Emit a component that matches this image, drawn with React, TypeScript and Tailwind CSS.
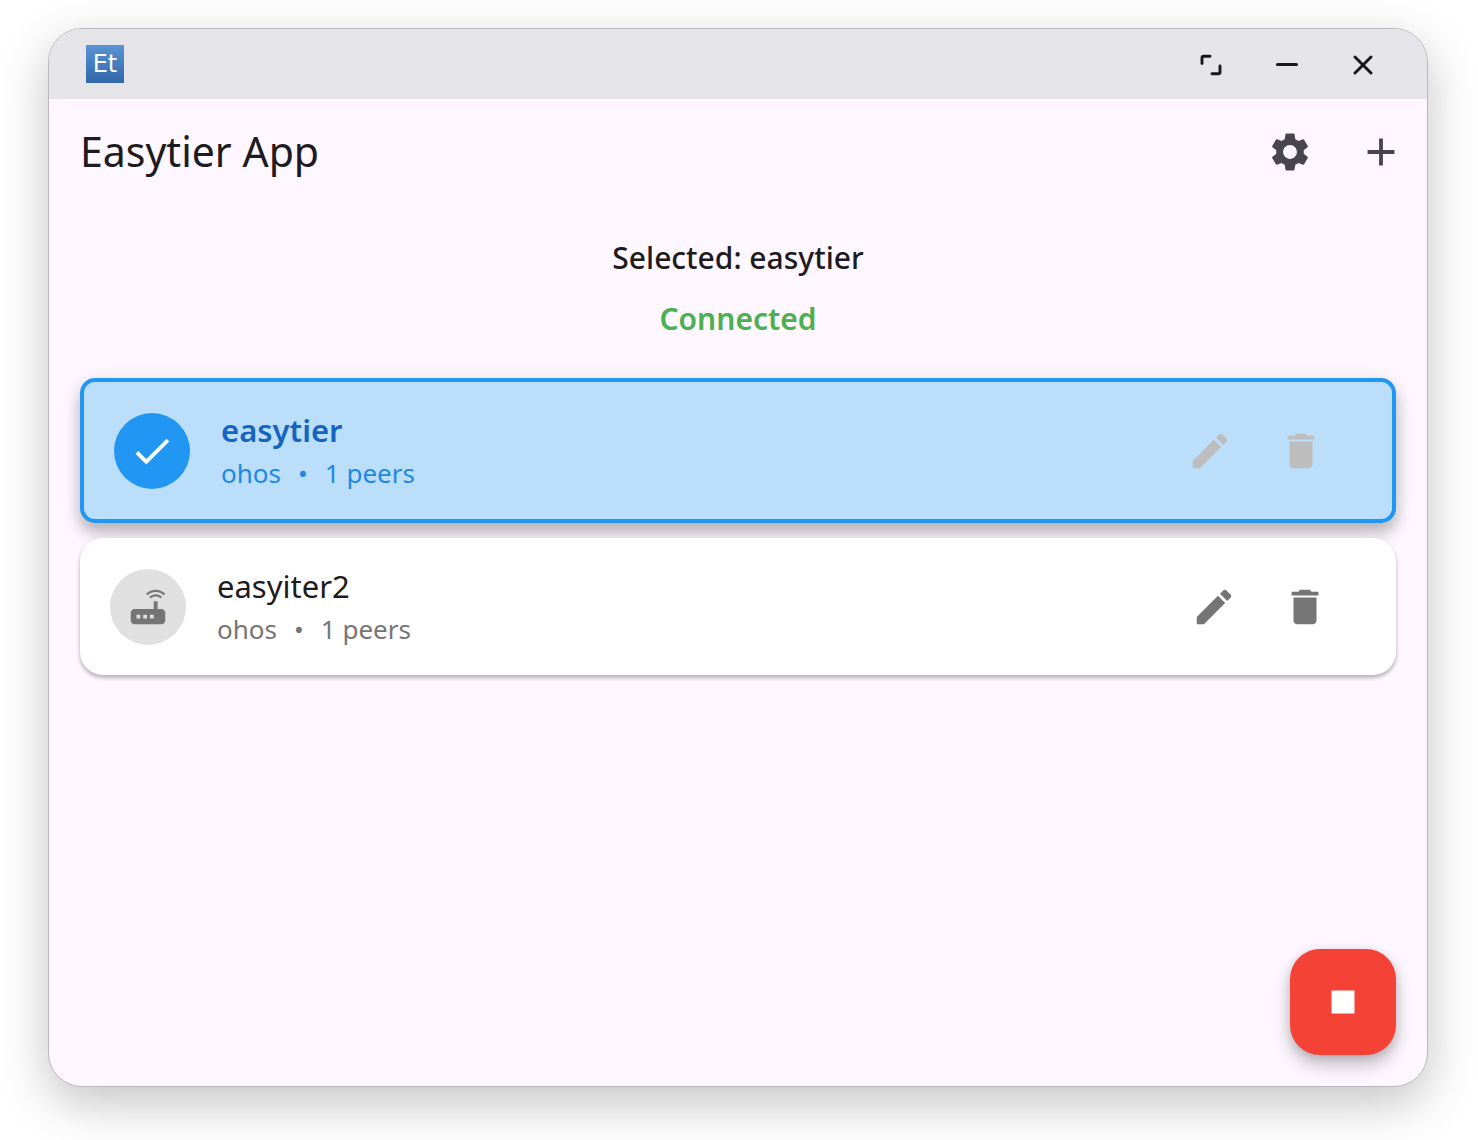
import React from "react";
import { MdAdd, MdCheck, MdDelete, MdEdit, MdRouter, MdSettings, MdStop } from "react-icons/md";

type Network = { name: string; host: string; peers: number; selected: boolean };

const networks: Network[] = [
  { name: "easytier", host: "ohos", peers: 1, selected: true },
  { name: "easyiter2", host: "ohos", peers: 1, selected: false },
];

function TitleBar() {
  return (
    <div className="flex h-[70px] shrink-0 items-center justify-between bg-[#e5e4e9] pr-[26px] pl-[37px]">
      <div className="flex size-[38px] items-center justify-center bg-linear-to-b from-[#5b93d3] to-[#2f67a8] font-['DejaVu_Sans',sans-serif] text-2xl leading-none text-white">
        Et
      </div>
      <div className="flex text-[#18181a]">
        <button type="button" aria-label="Maximize" className="flex h-[70px] w-[76px] items-center justify-center">
          <svg width="24" height="24" viewBox="0 0 24 24" fill="none" stroke="currentColor" strokeWidth="2.9" strokeLinecap="round">
            <path d="M3 11.500V6Q3 4.200 4.800 4.200H11M21 14V20Q21 21.800 19.200 21.800H13" />
          </svg>
        </button>
        <button type="button" aria-label="Minimize" className="flex h-[70px] w-[76px] items-center justify-center">
          <svg width="24" height="24" viewBox="0 0 24 24" fill="none" stroke="currentColor" strokeWidth="3" strokeLinecap="round">
            <path d="M2.500 12.500H21.500" />
          </svg>
        </button>
        <button type="button" aria-label="Close" className="flex h-[70px] w-[76px] items-center justify-center">
          <svg width="24" height="24" viewBox="0 0 24 24" fill="none" stroke="currentColor" strokeWidth="3" strokeLinecap="round">
            <path d="M4 5L20 21M20 5L4 21" />
          </svg>
        </button>
      </div>
    </div>
  );
}

function NetworkCard({ network }: { network: Network }) {
  const { name, host, peers, selected } = network;
  return (
    <li
      className={
        selected
          ? "flex items-center rounded-[15px] border-4 border-[#2196f3] bg-[#bbdefb] pr-[46px] shadow-[0_10px_14px_rgba(0,0,0,0.2),0_6px_24px_rgba(0,0,0,0.12)]"
          : "flex items-center rounded-[23px] bg-white pr-[46px] shadow-[0_3px_4px_rgba(0,0,0,0.2),0_2px_4px_rgba(0,0,0,0.12)]"
      }
    >
      <button type="button" aria-pressed={selected} className="flex min-w-0 flex-1 items-center gap-[31px] py-6 pl-[30px] text-left">
        <span
          className={
            selected
              ? "flex size-[76px] shrink-0 items-center justify-center rounded-full bg-[#2196f3] text-white"
              : "flex size-[76px] shrink-0 items-center justify-center rounded-full bg-[#e0e0e0] text-[#757575]"
          }
        >
          {selected ? <MdCheck size={46} /> : <MdRouter size={46} />}
        </span>
        <span className="flex min-w-0 flex-col pt-[3px]">
          <span className={selected ? "text-[31px] leading-[42px] font-semibold text-[#1565c0]" : "text-[31px] leading-[42px] text-[#1d1b20]"}>
            {name}
          </span>
          <span className={selected ? "flex gap-[17px] text-[26px] leading-[44px] text-[#1e88e5]" : "flex gap-[17px] text-[26px] leading-[44px] text-[#757575]"}>
            <span>{host}</span>
            <span>•</span>
            <span>{peers} peers</span>
          </span>
        </span>
      </button>
      <div className={selected ? "flex text-[#bdbdbd]" : "flex text-[#757575]"}>
        <button type="button" aria-label={`Edit ${name}`} disabled={selected} className="flex size-[91px] items-center justify-center">
          <MdEdit size={46} />
        </button>
        <button type="button" aria-label={`Delete ${name}`} disabled={selected} className="flex size-[91px] items-center justify-center">
          <MdDelete size={46} />
        </button>
      </div>
    </li>
  );
}

export default function App() {
  return (
    <div className="flex h-screen bg-white pt-7 pr-[50px] pb-[53px] pl-12 font-['Noto_Sans',sans-serif]">
      <div className="relative flex flex-1 flex-col overflow-hidden rounded-[34px] border border-[#b9b8bb] bg-[#fef7ff] shadow-[0_16px_50px_rgba(0,0,0,0.24)]">
        <TitleBar />
        <header className="flex h-[106px] shrink-0 items-center justify-between pr-px pl-[31px]">
          <h1 className="pb-0.5 text-[41px] leading-[56px] text-[#1d1b20]">Easytier App</h1>
          <div className="flex text-[#49454f]">
            <button type="button" aria-label="Settings" className="flex size-[91px] items-center justify-center">
              <MdSettings size={46} />
            </button>
            <button type="button" aria-label="Add network" className="flex size-[91px] items-center justify-center">
              <MdAdd size={46} />
            </button>
          </div>
        </header>
        <main className="flex flex-col px-[31px] pt-[30px]">
          <div className="flex flex-col items-center gap-[15px] text-[30px] leading-[46px]">
            <p className="font-medium text-[#1d1b20]">Selected: easytier</p>
            <p className="font-semibold text-[#4caf50]">Connected</p>
          </div>
          <ul className="flex flex-col gap-[15px] pt-9">
            {networks.map((network) => (
              <NetworkCard key={network.name} network={network} />
            ))}
          </ul>
        </main>
        <button
          type="button"
          aria-label="Stop"
          className="absolute right-[31px] bottom-[31px] flex size-[106px] items-center justify-center rounded-[30px] bg-[#f44336] text-white shadow-[0_10px_18px_rgba(0,0,0,0.24),0_2px_10px_rgba(0,0,0,0.12)]"
        >
          <MdStop size={46} />
        </button>
      </div>
    </div>
  );
}
